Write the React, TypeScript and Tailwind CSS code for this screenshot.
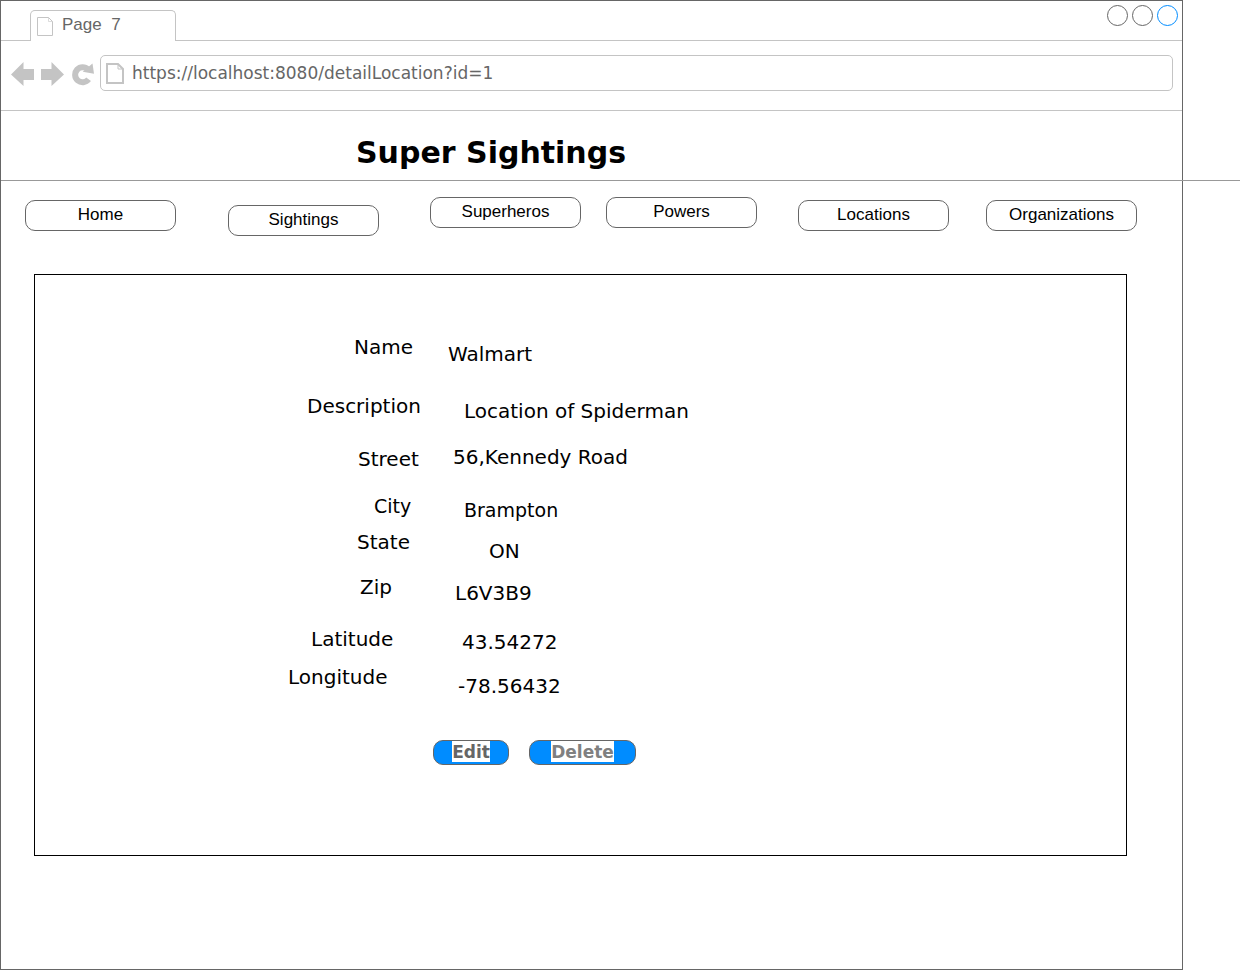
type NavItem = { label: string; place: string };
type Field = { label: string; value: string; row: string; labelPlace: string; valuePlace: string };

const navItems: NavItem[] = [
  { label: "Home", place: "mt-[3px] ml-6" },
  { label: "Sightings", place: "mt-2 ml-[52px]" },
  { label: "Superheros", place: "ml-[51px]" },
  { label: "Powers", place: "ml-[25px]" },
  { label: "Locations", place: "mt-[3px] ml-[41px]" },
  { label: "Organizations", place: "mt-[3px] ml-[37px]" },
];

const fields: Field[] = [
  { label: "Name", value: "Walmart", row: "h-[59px]", labelPlace: "pl-[319px]", valuePlace: "pt-[7px] pl-0.5" },
  { label: "Description", value: "Location of Spiderman", row: "h-[51px]", labelPlace: "pl-[272px]", valuePlace: "pt-[5px] pl-[18px]" },
  { label: "Street", value: "56,Kennedy Road", row: "h-[49px]", labelPlace: "pt-0.5 pl-[323px]", valuePlace: "pl-[7px]" },
  { label: "City", value: "Brampton", row: "h-9", labelPlace: "pl-[339px] text-[19px]", valuePlace: "pt-1 pl-[18px] text-[19px]" },
  { label: "State", value: "ON", row: "h-[45px]", labelPlace: "pl-[322px]", valuePlace: "pt-[9px] pl-[43px]" },
  { label: "Zip", value: "L6V3B9", row: "h-[52px]", labelPlace: "pl-[325px]", valuePlace: "pt-1.5 pl-[9px]" },
  { label: "Latitude", value: "43.54272", row: "h-[38px]", labelPlace: "pl-[276px]", valuePlace: "pt-[3px] pl-4" },
  { label: "Longitude", value: "-78.56432", row: "h-9", labelPlace: "pl-[253px]", valuePlace: "pt-[9px] pl-3" },
];

function BrowserTabs() {
  return (
    <div className="flex h-10 items-stretch">
      <div className="w-[29px] border-b border-[#c4c4c4]" />
      <div className="mt-[9px] flex w-[146px] rounded-t-[5px] border border-b-0 border-[#c4c4c4] pl-1.5">
        <svg className="mt-1.5 h-[19px] w-4" viewBox="0 0 16 19" fill="none" stroke="#c4c4c4" aria-hidden="true">
          <path d="M.5 .5H11.5L15.5 4.5V18.5H.5Z" />
          <path d="M11.5 .5V4.5H15.5" strokeOpacity=".6" />
        </svg>
        <span className="mt-1 ml-[9px] font-['Liberation_Sans',Arial,sans-serif] text-[17px] leading-5 whitespace-pre text-[#666]">
          {"Page  7"}
        </span>
      </div>
      <div className="flex flex-1 items-start justify-end gap-1 border-b border-[#c4c4c4] pt-1 pr-1">
        <button type="button" aria-label="Minimize" className="size-[21px] rounded-full border border-[#666]" />
        <button type="button" aria-label="Maximize" className="size-[21px] rounded-full border border-[#666]" />
        <button type="button" aria-label="Close" className="size-[21px] rounded-full border border-[#008cff]" />
      </div>
    </div>
  );
}

function AddressBar() {
  return (
    <div className="flex h-[70px] items-start border-b border-[#c4c4c4] pt-3.5 pr-[9px] pl-2.5">
      <button type="button" aria-label="Back" className="mt-[7px]">
        <svg className="h-6 w-[23px]" viewBox="0 0 23 24" fill="#c4c4c4" aria-hidden="true">
          <path d="M0 12.5 12.5 0V7H23V18H12.5V24Z" />
        </svg>
      </button>
      <button type="button" aria-label="Forward" className="mt-[7px] ml-[7px]">
        <svg className="h-6 w-[23px]" viewBox="0 0 23 24" fill="#c4c4c4" aria-hidden="true">
          <path d="M23 12.5 10.5 0V7H0V18H10.5V24Z" />
        </svg>
      </button>
      <button type="button" aria-label="Reload" className="mt-2 ml-2">
        <svg className="h-[23px] w-[22px]" viewBox="0 0 22 23" aria-hidden="true">
          <path d="M16 6.5A7.5 7.5 0 1 0 16.6 16.3" fill="none" stroke="#c4c4c4" strokeWidth="6" />
          <path d="M20.5 .5 22 10.8 10.7 8.8Z" fill="#c4c4c4" />
        </svg>
      </button>
      <label className="ml-[6px] flex h-9 flex-1 rounded-[5px] border border-[#c4c4c4] pl-[5px]">
        <svg className="mt-[7px] h-[21px] w-[18px] shrink-0" viewBox="0 0 18 21" fill="none" stroke="#c4c4c4" aria-hidden="true">
          <path d="M1 1H12L17 6V20H1Z" strokeWidth="2" />
          <path d="M12 1V6H17" />
        </svg>
        <input
          aria-label="Address"
          defaultValue="https://localhost:8080/detailLocation?id=1"
          className="ml-2 h-[34px] min-w-0 flex-1 bg-transparent font-['DejaVu_Sans',Verdana,sans-serif] text-[17px] text-[#666] outline-none"
        />
      </label>
    </div>
  );
}

export default function App() {
  return (
    <div className="min-h-screen overflow-x-hidden bg-white font-['DejaVu_Sans',Verdana,sans-serif] text-black">
      <div className="mr-[57px] min-h-screen border border-[#666]">
        <BrowserTabs />
        <AddressBar />
        <header className="-mr-[58px] h-[70px] border-b border-[#999] pt-6 pl-[355px]">
          <h1 className="text-[30px] leading-9 font-bold">Super Sightings</h1>
        </header>
        <nav className="flex items-start pt-4 font-['Liberation_Sans',Arial,sans-serif]">
          {navItems.map((item) => (
            <a
              key={item.label}
              href="#"
              className={`h-[31px] w-[151px] rounded-[10px] border border-[#666] pt-1 text-center text-[17px] leading-5 ${item.place}`}
            >
              {item.label}
            </a>
          ))}
        </nav>
        <main className="mt-[38px] mr-[55px] mb-8 ml-[33px] border border-black pt-[60px] pb-[90px]">
          <dl className="text-[20px] leading-6">
            {fields.map((field) => (
              <div key={field.label} className={`flex ${field.row}`}>
                <dt className={`w-[411px] ${field.labelPlace}`}>{field.label}</dt>
                <dd className={field.valuePlace}>{field.value}</dd>
              </div>
            ))}
          </dl>
          <div className="mt-[39px] flex gap-5 pl-[398px] text-[17px] leading-[22px] font-bold">
            <button type="button" className="flex h-[25px] w-[76px] items-start justify-center rounded-[10px] border border-[#666] bg-[#008cff] text-[#666]">
              <span className="h-[21px] bg-white">Edit</span>
            </button>
            <button type="button" className="flex h-[25px] w-[107px] items-start justify-center rounded-[10px] border border-[#666] bg-[#008cff] text-[#808080]">
              <span className="h-[21px] bg-white">Delete</span>
            </button>
          </div>
        </main>
      </div>
    </div>
  );
}
